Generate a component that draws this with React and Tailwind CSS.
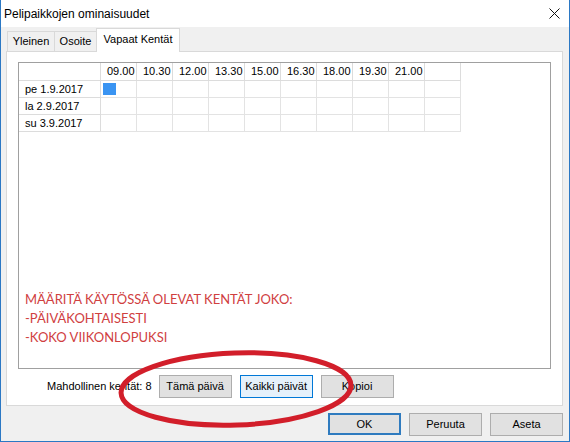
import React from "react";

const times = ["09.00", "10.30", "12.00", "13.30", "15.00", "16.30", "18.00", "19.30", "21.00", ""];
const days = ["pe 1.9.2017", "la 2.9.2017", "su 3.9.2017"];

const Btn = ({ children, active, main }) => (
  <button
    className={
      main
        ? "w-[73px] h-[22px] bg-[#e1e1e1] border-2 border-[#2f7bbf] text-[11px] text-black"
        : active
        ? "w-[73px] h-[23px] bg-[#e5f1fb] border border-[#0078d7] text-[11px] text-black"
        : "w-[73px] h-[23px] bg-[#e1e1e1] border border-[#adadad] text-[11px] text-black"
    }
  >
    {children}
  </button>
);

const App = () => {
  return (
    <div className="relative w-[570px] h-[442px] bg-[#f0f0f0] border-l border-r border-b border-[#2b78c4] flex flex-col font-['Liberation_Sans',Arial,sans-serif] text-[11px] text-black overflow-hidden">
      {/* title bar */}
      <div className="h-[27px] bg-white flex items-center justify-between pl-[3px] pr-[9px] shrink-0">
        <span className="text-[12px]">Pelipaikkojen ominaisuudet</span>
        <svg width="11" height="11" viewBox="0 0 11 11">
          <path d="M0.5 0.5 L10.5 10.5 M10.5 0.5 L0.5 10.5" stroke="#111" strokeWidth="1" />
        </svg>
      </div>

      {/* tabs */}
      <div className="flex items-end h-[23px] mt-[1px] pl-[6px] shrink-0">
        <div className="h-[20px] w-[48px] border border-b-0 border-[#d9d9d9] bg-[#f0f0f0] flex items-center justify-center">
          Yleinen
        </div>
        <div className="h-[20px] w-[42px] border-t border-r border-[#d9d9d9] bg-[#f0f0f0] flex items-center justify-center">
          Osoite
        </div>
        <div className="relative z-10 h-[24px] mb-[-1px] ml-[-1px] w-[84px] border border-b-0 border-[#d9d9d9] bg-white flex items-center justify-center pb-[2px]">
          Vapaat Kentät
        </div>
      </div>

      {/* panel */}
      <div className="ml-[5px] w-[557px] h-[355px] border border-[#d9d9d9] bg-white flex flex-col shrink-0">
        <div className="ml-[11px] mt-[10px] w-[533px] h-[307px] border border-[#a0a0a0] bg-white flex flex-col">
          <div className="grid grid-cols-[82px_repeat(10,36px)] w-max">
            <div className="h-[18px] border-r border-b border-[#dcdcdc]" />
            {times.map((t, i) => (
              <div key={i} className="h-[18px] border-r border-b border-[#dcdcdc] pl-[6px] leading-[17px]">
                {t}
              </div>
            ))}
            {days.map((d, r) => (
              <React.Fragment key={d}>
                <div className="h-[17px] border-r border-b border-[#dcdcdc] pl-[6px] leading-[16px]">{d}</div>
                {times.map((t, i) => (
                  <div key={i} className="h-[17px] border-r border-b border-[#e3e3e3] relative">
                    {r === 0 && i === 0 && (
                      <div className="absolute left-[2px] top-[2px] w-[13px] h-[12px] bg-[#3a94f2]" />
                    )}
                  </div>
                ))}
              </React.Fragment>
            ))}
          </div>
          <div className="mt-[158px] pl-[6px] font-['Lato',sans-serif] text-[13px] leading-[19px] text-[#d0403f]">
            <div>MÄÄRITÄ KÄYTÖSSÄ OLEVAT KENTÄT JOKO:</div>
            <div>-PÄIVÄKOHTAISESTI</div>
            <div>-KOKO VIIKONLOPUKSI</div>
          </div>
        </div>
        <div className="flex items-center mt-[6px] pl-[40px]">
          <span>Mahdollinen kentät: 8</span>
          <div className="flex gap-[8px] ml-[7px]">
            <Btn>Tämä päivä</Btn>
            <Btn active>Kaikki päivät</Btn>
            <Btn>Kopioi</Btn>
          </div>
        </div>
      </div>

      {/* dialog buttons */}
      <div className="flex justify-end gap-[8px] mt-[7px] pr-[6px]">
        <Btn main>OK</Btn>
        <Btn>Peruuta</Btn>
        <Btn>Aseta</Btn>
      </div>

      {/* red hand-drawn ellipse */}
      <svg className="absolute left-0 top-0 pointer-events-none" width="570" height="442">
        <ellipse
          cx="235"
          cy="389"
          rx="115"
          ry="36"
          fill="none"
          stroke="#d21e2a"
          strokeWidth="5"
          transform="rotate(-2 235 389)"
        />
      </svg>
    </div>
  );
};

export default App;
